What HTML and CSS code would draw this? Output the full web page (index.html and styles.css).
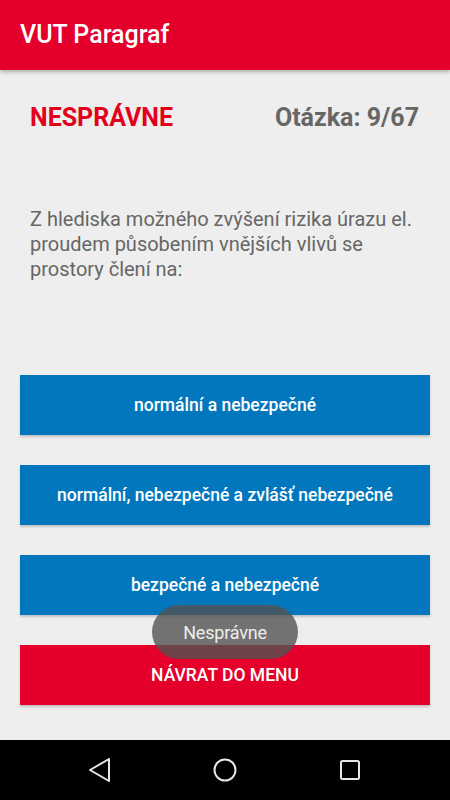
FILE: index.html
```html
<!DOCTYPE html>
<html lang="cs">
<head>
<meta charset="utf-8">
<title>VUT Paragraf</title>
<link rel="stylesheet" href="styles.css">
</head>
<body>
<div class="screen">
  <header class="appbar">
    <h1 class="appbar-title">VUT Paragraf</h1>
  </header>
  <main class="content">
    <div class="status-row">
      <span class="status-wrong">NESPRÁVNE</span>
      <span class="status-count">Otázka: 9/67</span>
    </div>
    <p class="question">Z hlediska možného zvýšení rizika úrazu el. proudem působením vnějších vlivů se prostory člení na:</p>
    <div class="answers">
      <button class="btn btn-answer">normální a nebezpečné</button>
      <button class="btn btn-answer">normální, nebezpečné a zvlášť nebezpečné</button>
      <button class="btn btn-answer">bezpečné a nebezpečné</button>
      <button class="btn btn-menu">NÁVRAT DO MENU</button>
    </div>
  </main>
  <nav class="navbar">
    <span class="nav-cell"><svg width="24" height="26" viewBox="0 0 24 26"><path d="M21 2 L2 13 L21 24 Z" fill="none" stroke="#e6e6e6" stroke-width="2" stroke-linejoin="round"/></svg></span>
    <span class="nav-cell"><svg width="26" height="26" viewBox="0 0 26 26"><circle cx="13" cy="13" r="10.5" fill="none" stroke="#e6e6e6" stroke-width="2"/></svg></span>
    <span class="nav-cell"><svg width="24" height="24" viewBox="0 0 24 24"><rect x="3" y="3" width="18" height="18" rx="1.5" fill="none" stroke="#e6e6e6" stroke-width="2"/></svg></span>
  </nav>
  <div class="toast">Nesprávne</div>
</div>
</body>
</html>
```
FILE: styles.css
```css
* { box-sizing: border-box; }
html, body { margin: 0; padding: 0; }
body {
  font-family: Roboto, "Noto Sans", "Liberation Sans", sans-serif;
  background: #eeeeee;
}
.screen {
  position: relative;
  width: 450px;
  height: 800px;
  display: flex;
  flex-direction: column;
  overflow: hidden;
  background: #eeeeee;
}
.appbar {
  height: 70px;
  flex: 0 0 70px;
  background: #e4002b;
  display: flex;
  align-items: center;
  padding: 0 20px;
  box-shadow: 0 2px 4px rgba(0,0,0,0.28);
  position: relative;
  z-index: 1;
}
.appbar-title {
  margin: 0;
  color: #ffffff;
  font-size: 25px;
  font-weight: 500;
  line-height: 30px;
}
.content {
  flex: 1;
  padding: 33px 20px 0;
}
.status-row {
  display: flex;
  justify-content: space-between;
  padding: 0 11px 0 10px;
  font-size: 25px;
  line-height: 30px;
  font-weight: 700;
}
.status-wrong { color: #e3001b; }
.status-count { color: #666666; }
.question {
  margin: 74px 0 0;
  padding: 0 10px;
  font-size: 20px;
  line-height: 25px;
  color: #666666;
}
.answers {
  margin-top: 93px;
  display: flex;
  flex-direction: column;
  gap: 30px;
}
.btn {
  display: block;
  width: 100%;
  height: 60px;
  border: 0;
  border-radius: 0;
  color: #ffffff;
  font-family: Roboto, "Noto Sans", "Liberation Sans", sans-serif;
  font-size: 17.5px;
  font-weight: 500;
  box-shadow: 0 2px 2px rgba(0,0,0,0.18);
  padding: 0;
}
.btn-answer { background: #0277bd; }
.btn-menu { background: #e4002b; }
.navbar {
  height: 60px;
  flex: 0 0 60px;
  background: #000000;
  display: grid;
  grid-template-columns: repeat(3, 125px);
  padding: 0 37.5px;
  align-items: center;
}
.nav-cell {
  display: flex;
  justify-content: center;
  align-items: center;
}
.nav-cell svg { display: block; }
.toast {
  position: absolute;
  left: 152px;
  top: 605px;
  width: 146px;
  height: 54px;
  border-radius: 27px;
  background: rgba(82,82,82,0.8);
  color: #eeeeee;
  font-size: 18px;
  display: flex;
  align-items: center;
  justify-content: center;
  letter-spacing: -0.2px;
}
```
